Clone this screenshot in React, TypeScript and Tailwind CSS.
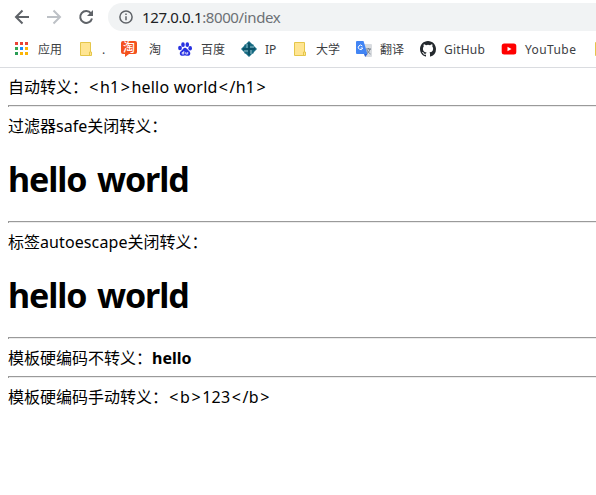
import type { ReactNode } from "react";

const latin = "font-['Noto_Sans','Noto_Sans_CJK_SC',sans-serif]";

function Item({ w, gap = "gap-2", icon, children }: { w: string; gap?: string; icon: ReactNode; children?: ReactNode }) {
  return (
    <div className={`flex h-full shrink-0 items-center ${gap} ${w}`}>
      <svg width="16" height="16" viewBox="0 0 16 16" className="shrink-0 overflow-visible">{icon}</svg>
      <span className="pt-0.5 whitespace-nowrap">{children}</span>
    </div>
  );
}

const appColors = ["#ea4335", "#ea4335", "#ea4335", "#34a853", "#1a8cff", "#fbb405", "#2a9d55", "#fbb405", "#fbb405"];
const apps = appColors.map((c, i) => (
  <rect key={i} x={1 + (i % 3) * 5} y={1 + Math.floor(i / 3) * 5} width="3" height="3" fill={c} />
));

const folder = (
  <g fill="#ffe592" stroke="#e5c64a">
    <path d="M2.500 1.500h10v9.500h1v3.500H2.500z" />
    <path d="M11.500 14.500v-3.500h1" fill="none" />
  </g>
);

const taobao = (
  <g>
    <path d="M2 0h12a2 2 0 0 1 2 2v9a2 2 0 0 1-2 2H8l-4 3v-3H2a2 2 0 0 1-2-2V2a2 2 0 0 1 2-2z" fill="#f4511e" />
    <text x="2" y="10.800" fontSize="12" fontWeight="500" fill="#fff" fontFamily="Noto Sans CJK SC">淘</text>
  </g>
);

const baidu = (
  <g fill="#2932e1">
    <ellipse cx="3" cy="7" rx="1.900" ry="2.300" />
    <ellipse cx="6" cy="3.700" rx="1.800" ry="2.400" />
    <ellipse cx="10.300" cy="3.700" rx="1.800" ry="2.400" />
    <ellipse cx="13.200" cy="7.200" rx="1.800" ry="2.300" />
    <path d="M8 6.700c1.600 0 2.200 1.600 3.500 2.800s2.200 2 1.700 3.700c-.500 1.800-2.300 1.700-3.600 1.500-1-.200-2.200-.200-3.200 0-1.300.200-3 .200-3.500-1.500-.500-1.700.500-2.600 1.700-3.700S6.400 6.700 8 6.700z" />
    <path d="M6.800 10v3H5.200v-1.500h1.600M8.800 11v2h1.900v-2" fill="none" stroke="#fff" strokeWidth=".8" />
  </g>
);

const ip = (
  <g>
    <path d="M8 0 16 8 8 16 0 8z" fill="#176b82" />
    <path d="M3.500 3.500h9v9h-9z" fill="#176b82" />
    <path d="M8 2v12M2 8h12" stroke="#0b4c62" strokeWidth="1.500" />
    <path d="M6 3v4M10 9v4M9 6h4M3 10h4" stroke="#b5d3db" strokeWidth=".8" />
  </g>
);

const translate = (
  <g>
    <path d="M6 3h9a1 1 0 0 1 1 1v11a1 1 0 0 1-1 1H9z" fill="#d9dce0" />
    <path d="M1 0h6.500l4 13H1a1 1 0 0 1-1-1V1a1 1 0 0 1 1-1z" fill="#4285f4" />
    <path d="M8 13h3.500L9.200 16z" fill="#3367d6" />
    <path d="M6.300 5A2.200 2.200 0 1 0 6.700 7H4.700" fill="none" stroke="#fff" strokeWidth="1" />
    <path d="M10 8h5M12.300 7v1M14 8c-.500 2-1.700 3.500-3 4.500M11 9c.500 1.500 2 3 3.500 4" fill="none" stroke="#66727f" strokeWidth=".9" />
  </g>
);

const github = (
  <path fill="#24292e" d="M8 0C3.580 0 0 3.580 0 8c0 3.540 2.290 6.530 5.470 7.590.4.070.55-.17.55-.38 0-.19-.01-.82-.01-1.490-2.010.37-2.530-.49-2.690-.94-.09-.23-.48-.94-.82-1.130-.28-.15-.68-.52-.01-.53.63-.01 1.080.58 1.230.82.72 1.210 1.870.87 2.330.66.07-.52.28-.87.51-1.070-1.780-.2-3.640-.89-3.640-3.950 0-.87.31-1.590.82-2.150-.08-.2-.36-1.020.08-2.120 0 0 .67-.21 2.200.82a7.600 7.600 0 0 1 4 0c1.530-1.040 2.200-.82 2.200-.82.44 1.100.16 1.920.08 2.120.51.56.82 1.270.82 2.150 0 3.070-1.870 3.750-3.650 3.950.29.25.54.73.54 1.480 0 1.070-.01 1.930-.01 2.200 0 .21.15.46.55.38A8 8 0 0 0 16 8c0-4.420-3.580-8-8-8z" />
);

const youtube = (
  <g>
    <rect x=".7" y="2.500" width="14.600" height="11" rx="2.500" fill="#f00" />
    <path d="M6.500 5.700v4.600l4-2.300z" fill="#fff" />
  </g>
);

function Rule() {
  return <div className="my-2 h-0.5 border-t border-l border-[#9a9a9a] bg-[#ececec]" />;
}

function Line({ children }: { children: ReactNode }) {
  return <div className="h-[21px] pt-px text-base leading-[21px] whitespace-nowrap">{children}</div>;
}

function Heading() {
  return (
    <h1 className="h-[77px] pt-[22px] text-[34px] leading-[43px] font-bold whitespace-nowrap">
      <span className="tracking-[-1.1px] [word-spacing:2.8px]">hello world</span>
    </h1>
  );
}

function Tag({ children }: { children: string }) {
  return (
    <>
      <span className="inline-block w-3 text-center">{"<"}</span>
      {children}
      <span className="inline-block w-3 text-center">{">"}</span>
    </>
  );
}

export default function App() {
  return (
    <div className={`h-[495px] w-full overflow-hidden bg-white text-black ${latin}`}>
      <header className="h-[68px] border-b border-[#dadce0]">
        <div className="flex h-[34px] items-center">
          <svg width="108" height="34" viewBox="0 0 108 34" fill="none" stroke="#5f6368" strokeWidth="2" className="shrink-0">
            <path d="M29 17H16.500M22.500 10.500 16 17l6.500 6.500" />
            <path d="M47 17h12.500M53.500 10.500 60 17l-6.500 6.500" stroke="#bdc1c6" />
            <path d="M91 13.300A6 6 0 1 0 92 18.500" />
            <path d="M93 10v6h-6z" fill="#5f6368" stroke="none" />
          </svg>
          <div className="flex h-7 flex-1 items-center rounded-l-full bg-[#f1f3f4] pl-[11px]">
            <svg width="14" height="14" viewBox="0 0 14 14" fill="none" stroke="#5f6368" strokeWidth="1.500" className="shrink-0">
              <circle cx="7" cy="7" r="6.100" />
              <path d="M7 6.200v4M7 3.500v1.500" />
            </svg>
            <span className="-mt-px ml-[9px] text-[15px] leading-7 tracking-[-0.38px] whitespace-nowrap text-[#202124]">
              127.0.0.1<span className="text-[#6c7075]">:8000/index</span>
            </span>
          </div>
        </div>
        <nav className="flex h-[30px] items-center pl-3.5 text-xs text-[#3c4043]">
          <Item w="w-16" icon={apps}>应用</Item>
          <Item w="w-[43px]" icon={folder}>.</Item>
          <Item w="w-14" gap="gap-3" icon={taobao}>淘</Item>
          <Item w="w-16" icon={baidu}>百度</Item>
          <Item w="w-[51px]" icon={ip}>IP</Item>
          <Item w="w-16" icon={folder}>大学</Item>
          <Item w="w-16" icon={translate}>翻译</Item>
          <Item w="w-[81px]" icon={github}><span className="tracking-[0.2px]">GitHub</span></Item>
          <Item w="w-[92px]" icon={youtube}><span className="tracking-[0.4px]">YouTube</span></Item>
          <Item w="w-4" icon={folder} />
        </nav>
      </header>
      <main className="pt-2 pl-2">
        <Line>自动转义：<span className="tracking-[0.2px]"><Tag>h1</Tag>hello world<Tag>/h1</Tag></span></Line>
        <Rule />
        <Line>过滤器<span>safe</span>关闭转义：</Line>
        <Heading />
        <Rule />
        <Line>标签<span className="tracking-[0.1px]">autoescape</span>关闭转义：</Line>
        <Heading />
        <Rule />
        <Line>模板硬编码不转义：<b>hello</b></Line>
        <Rule />
        <Line>模板硬编码手动转义：<span className="tracking-[0.3px]"><Tag>b</Tag>123<Tag>/b</Tag></span></Line>
      </main>
    </div>
  );
}
